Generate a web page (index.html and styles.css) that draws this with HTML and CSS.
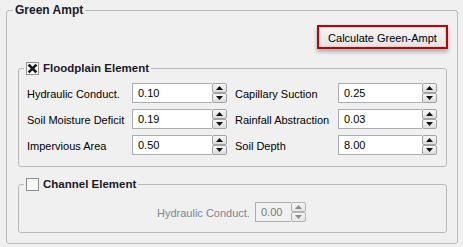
FILE: index.html
```html
<!DOCTYPE html>
<html>
<head>
<meta charset="utf-8">
<link rel="stylesheet" href="styles.css">
</head>
<body>
<fieldset class="grp outer">
  <legend class="title-outer">Green Ampt</legend>
  <div class="btnrow"><button class="calc">Calculate Green-Ampt</button></div>

  <fieldset class="grp sub flood">
    <legend class="title-sub"><span class="chk"><svg width="11" height="11" viewBox="0 0 11 11"><path d="M2.5 2.5 L8.5 8.5 M8.5 2.5 L2.5 8.5" stroke="#1c1c1c" stroke-width="2.6" stroke-linecap="square"/></svg></span>Floodplain Element</legend>
    <div class="grid">
      <span class="lbl">Hydraulic Conduct.</span>
      <div class="spin w95"><span class="val">0.10</span><span class="arr"><span class="up"><svg width="7" height="4"><polygon points="0,4 7,4 3.5,0" fill="#111"/></svg></span><span class="dn"><svg width="7" height="4"><polygon points="0,0 7,0 3.5,4" fill="#111"/></svg></span></span></div>
      <span class="lbl lbl2">Capillary Suction</span>
      <div class="spin w99"><span class="val">0.25</span><span class="arr"><span class="up"><svg width="7" height="4"><polygon points="0,4 7,4 3.5,0" fill="#111"/></svg></span><span class="dn"><svg width="7" height="4"><polygon points="0,0 7,0 3.5,4" fill="#111"/></svg></span></span></div>

      <span class="lbl">Soil Moisture Deficit</span>
      <div class="spin w95"><span class="val">0.19</span><span class="arr"><span class="up"><svg width="7" height="4"><polygon points="0,4 7,4 3.5,0" fill="#111"/></svg></span><span class="dn"><svg width="7" height="4"><polygon points="0,0 7,0 3.5,4" fill="#111"/></svg></span></span></div>
      <span class="lbl lbl2">Rainfall Abstraction</span>
      <div class="spin w99"><span class="val">0.03</span><span class="arr"><span class="up"><svg width="7" height="4"><polygon points="0,4 7,4 3.5,0" fill="#111"/></svg></span><span class="dn"><svg width="7" height="4"><polygon points="0,0 7,0 3.5,4" fill="#111"/></svg></span></span></div>

      <span class="lbl">Impervious Area</span>
      <div class="spin w95"><span class="val">0.50</span><span class="arr"><span class="up"><svg width="7" height="4"><polygon points="0,4 7,4 3.5,0" fill="#111"/></svg></span><span class="dn"><svg width="7" height="4"><polygon points="0,0 7,0 3.5,4" fill="#111"/></svg></span></span></div>
      <span class="lbl lbl2">Soil Depth</span>
      <div class="spin w99"><span class="val">8.00</span><span class="arr"><span class="up"><svg width="7" height="4"><polygon points="0,4 7,4 3.5,0" fill="#111"/></svg></span><span class="dn"><svg width="7" height="4"><polygon points="0,0 7,0 3.5,4" fill="#111"/></svg></span></span></div>
    </div>
  </fieldset>

  <fieldset class="grp sub channel">
    <legend class="title-sub"><span class="chk"></span>Channel Element</legend>
    <div class="chrow">
      <span class="lbl dis">Hydraulic Conduct.</span>
      <div class="spin w51 disabled"><span class="val">0.00</span><span class="arr"><span class="up"><svg width="7" height="4"><polygon points="0,4 7,4 3.5,0" fill="#8a8a8a"/></svg></span><span class="dn"><svg width="7" height="4"><polygon points="0,0 7,0 3.5,4" fill="#8a8a8a"/></svg></span></span></div>
    </div>
  </fieldset>
</fieldset>
</body>
</html>
```
FILE: styles.css
```css
html, body {
  margin: 0;
  padding: 0;
  background: #f0f0f0;
  font-family: "Liberation Sans", Arial, sans-serif;
  font-size: 11px;
  color: #000;
}

.grp {
  border: 1px solid #b9b9b9;
  border-radius: 3px;
  margin: 0;
  min-inline-size: 0;
}

.grp legend {
  padding: 0 2px;
  height: 14px;
  line-height: 14px;
  font-weight: bold;
  color: #1a1a2a;
  display: flex;
  align-items: center;
}

.outer {
  margin: 3px 5px 0 6px;
  padding: 8px 10px 10px 11px;
}

.title-outer {
  font-size: 12px;
  margin-left: -5px;
}

.btnrow {
  display: flex;
  justify-content: flex-end;
  margin-right: -1px;
}

.calc {
  width: 131px;
  height: 24px;
  box-sizing: border-box;
  border: 2px solid #c00000;
  padding: 1px 0 0;
  background: linear-gradient(#f4f4f4, #e4e4e4);
  box-shadow: inset 0 0 0 1px #d8d8d8, 0 3px 4px rgba(0, 0, 0, 0.28);
  font-family: "Liberation Sans", Arial, sans-serif;
  font-size: 11px;
  color: #000;
}

.sub {
  padding: 8px 9px 11px 8px;
}

.flood {
  margin-top: 12px;
}

.channel {
  margin-top: 10px;
  padding-top: 11px;
  padding-bottom: 10px;
}

.title-sub {
  font-size: 11.5px;
  margin-left: -3px;
}

.chk {
  width: 13px;
  height: 13px;
  box-sizing: border-box;
  border: 1px solid #8e8f8f;
  background: linear-gradient(#f4f4f4, #ffffff);
  margin-right: 4px;
  display: inline-flex;
  align-items: center;
  justify-content: center;
}

.grid {
  display: grid;
  grid-template-columns: 105px 95px 111px 99px;
  grid-auto-rows: 20px;
  row-gap: 6px;
  align-items: center;
}

.lbl {
  white-space: nowrap;
  color: #000;
  padding-top: 2px;
}

.lbl2 {
  padding-left: 8px;
}

.spin {
  display: flex;
  height: 20px;
  box-sizing: border-box;
}

.w95 { width: 95px; }
.w99 { width: 99px; }
.w51 { width: 51px; }

.val {
  flex: 1;
  box-sizing: border-box;
  border: 1px solid #abadb3;
  border-right: none;
  background: #fff;
  padding-left: 5px;
  padding-top: 1px;
  line-height: 17px;
}

.arr {
  width: 15px;
  display: flex;
  flex-direction: column;
}

.arr .up, .arr .dn {
  flex: 1;
  box-sizing: border-box;
  border: 1px solid #a3a3a3;
  border-radius: 2px;
  background: linear-gradient(#f7f7f7, #dddddd);
  display: flex;
  align-items: center;
  justify-content: center;
}

.arr svg {
  display: block;
}

.chrow {
  display: flex;
  align-items: center;
  padding-left: 130px;
}

.chrow .lbl {
  width: 98px;
}

.dis {
  color: #7e8496;
}

.disabled .val {
  background: #f0f0f0;
  color: #7a7a7a;
  border-color: #adadad;
}

.disabled .arr .up, .disabled .arr .dn {
  border-color: #b2b2b2;
  background: linear-gradient(#f4f4f4, #e6e6e6);
}
```
